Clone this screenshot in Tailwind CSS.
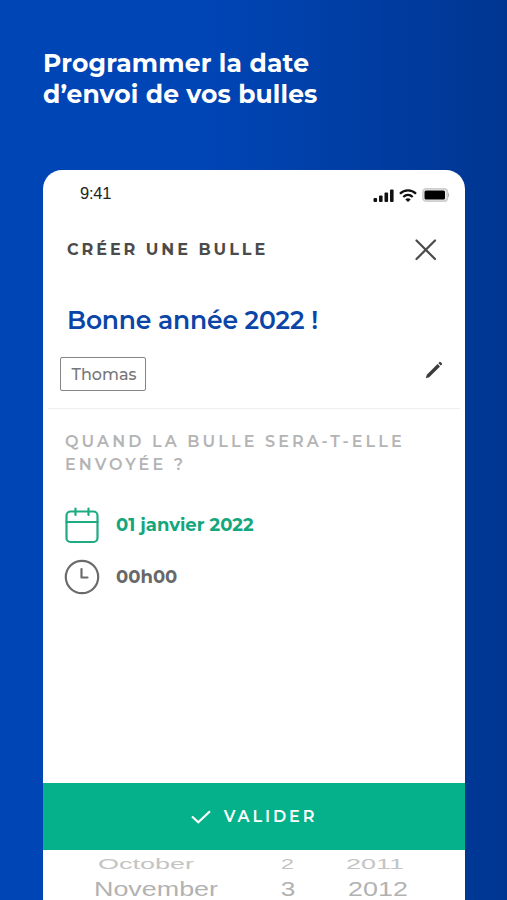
<!DOCTYPE html>
<html lang="fr">
  <head>
    <meta charset="UTF-8" />
    <meta name="viewport" content="width=device-width, initial-scale=1.0" />
    <title>Créer une bulle</title>
    <script src="https://cdn.jsdelivr.net/npm/@tailwindcss/browser@4"></script>
  </head>

  <body
    class="h-[900px] w-[507px] overflow-hidden bg-linear-[90deg,#0045b6_0%,#0045b6_40%,#003691_100%] font-['Montserrat','Inter',sans-serif] whitespace-nowrap"
  >
    <h1 class="h-[170px] pt-12 pl-[43px] text-[25px] leading-[31px] font-bold text-white">
      <span class="tracking-[0.18px]">Programmer la date</span><br />
      <span class="tracking-[0.14px]">d’envoi de vos bulles</span>
    </h1>

    <main class="ml-[43px] flex h-[730px] w-[422px] flex-col overflow-hidden rounded-t-[19px] bg-white">
      <!-- Barre d'état -->
      <div class="flex h-[46px] items-center justify-between pr-[15px] pl-[37px]">
        <span class="font-['Liberation_Sans',sans-serif] text-[16.5px] tracking-[-0.2px] text-[#222]">9:41</span>
        <div class="flex items-center gap-[5px] pt-1">
          <svg class="h-[13px] w-[21px]" viewBox="0 0 21 13" fill="#111">
            <rect x="0.5" y="9" width="3.6" height="4" rx="1" />
            <rect x="6" y="6.5" width="3.6" height="6.5" rx="1" />
            <rect x="11.5" y="3.5" width="3.6" height="9.5" rx="1" />
            <rect x="17" y="0.5" width="3.6" height="12.5" rx="1" />
          </svg>
          <svg class="h-[13px] w-[18px]" viewBox="0 0 18 13" fill="none" stroke="#111" stroke-width="2.3">
            <path d="M1 4.8C5.5 0.3 12.5 0.3 17 4.8" />
            <path d="M4.3 8C7.1 5.3 10.9 5.3 13.7 8" />
            <path d="M6.3 10.4C7.8 8.9 10.2 8.9 11.7 10.4L9 13Z" fill="#111" stroke="none" />
          </svg>
          <svg class="h-[14px] w-[28px]" viewBox="0 0 28 14">
            <rect x="0.9" y="0.9" width="24.4" height="12.2" rx="3" fill="#eee" stroke="#cfcfcf" stroke-width="1.8" />
            <rect x="2.5" y="2.5" width="20.5" height="9" rx="1.5" fill="#000" />
            <path d="M26 4.5Q28 7 26 9.5Z" fill="#aaa" />
          </svg>
        </div>
      </div>

      <div class="flex h-[67px] items-center justify-between pr-[28px] pl-6">
        <h2 class="text-[16px] font-bold tracking-[2.95px] text-[#4b4b4b]">CRÉER UNE BULLE</h2>
        <svg class="size-[22px]" viewBox="0 0 22 22" fill="none" stroke="#4b4b4b" stroke-width="2.2" stroke-linecap="round">
          <path d="M1.5 1.5L20 20M20 1.5L1.5 20" />
        </svg>
      </div>

      <div class="flex h-[74px] items-center pt-px pl-6 text-[25px] font-semibold tracking-[-0.15px] text-[#0b45a8]">
        Bonne année 2022 !
      </div>

      <div class="mx-[5px] flex h-[52px] items-start justify-between border-b border-[#eee] pr-[17px] pl-3">
        <div class="flex h-[34px] w-[86px] items-center justify-center rounded-[2px] border border-[#858585] pt-px pl-0.5 text-[16px] font-medium text-[#777]">
          Thomas
        </div>
        <svg class="mt-1 size-[18px]" viewBox="0 0 18 18" fill="#3b3b3b">
          <path d="M0.8 17.2L1.8 13.8L12.6 3L15 5.4L4.2 16.2Z" />
          <path d="M13.4 2.2L14.5 1.1Q15.1 0.6 15.8 1.2L16.8 2.2Q17.4 2.9 16.9 3.5L15.8 4.6Z" />
        </svg>
      </div>

      <p class="mt-[22px] pl-[22px] text-[16px] leading-[22.5px] font-semibold text-[#b4b4b4]">
        <span class="tracking-[3.1px]">QUAND LA BULLE SERA-T-ELLE</span><br />
        <span class="tracking-[3.1px]">ENVOYÉE ?</span>
      </p>

      <div class="mt-[31px] flex h-[37px] items-center gap-[17px] pl-[22px]">
        <svg class="h-[37px] w-[34px]" viewBox="0 0 34 37" fill="none" stroke="#1eaa82" stroke-width="2.2" stroke-linecap="round">
          <rect x="1.5" y="4.5" width="31" height="30.5" rx="4" />
          <path d="M1.5 15H32.5M10.5 1.5V8M23.5 1.5V8" />
        </svg>
        <span class="text-[18px] font-bold text-[#14a67c]">01 janvier 2022</span>
      </div>

      <div class="mt-[15px] flex h-9 items-center gap-[16px] pl-[21px]">
        <svg class="size-9" viewBox="0 0 36 36" fill="none" stroke="#6b6b6b" stroke-width="2.2" stroke-linecap="round" stroke-linejoin="round">
          <circle cx="18" cy="18" r="16.2" />
          <path d="M17.5 10V18.5H23.5" />
        </svg>
        <span class="text-[18px] font-bold text-[#686868]">00h00</span>
      </div>

      <button class="mt-auto flex h-[67px] shrink-0 items-center justify-center gap-[13px] bg-[#04b18a] text-white">
        <svg class="h-[14px] w-[20px]" viewBox="0 0 20 14" fill="none" stroke="currentColor" stroke-width="2.2">
          <path d="M1 6.5L7.3 12.3L19 1.2" />
        </svg>
        <span class="text-[16px] font-semibold tracking-[2.9px]">VALIDER</span>
      </button>

      <!-- Sélecteur de date, lignes du haut aplaties -->
      <div class="h-[50px] shrink-0 font-['Liberation_Sans',sans-serif]">
        <div class="grid h-[27px] grid-cols-[206px_77px_98px] items-center text-center text-[20px] text-[#c4c4c4]">
          <span class="-translate-y-px scale-x-[1.35] scale-y-[0.72]">October</span>
          <span class="-translate-y-px scale-x-[1.2] scale-y-[0.72]">2</span>
          <span class="-translate-y-px scale-x-[1.35] scale-y-[0.72]">2011</span>
        </div>
        <div class="grid h-[23px] grid-cols-[226px_38px_142px] items-center text-center text-[21px] leading-[23px] text-[#b2b2b2]">
          <span class="scale-x-[1.28]">November</span>
          <span class="scale-x-[1.25]">3</span>
          <span class="scale-x-[1.28]">2012</span>
        </div>
      </div>
    </main>
  </body>
</html>
